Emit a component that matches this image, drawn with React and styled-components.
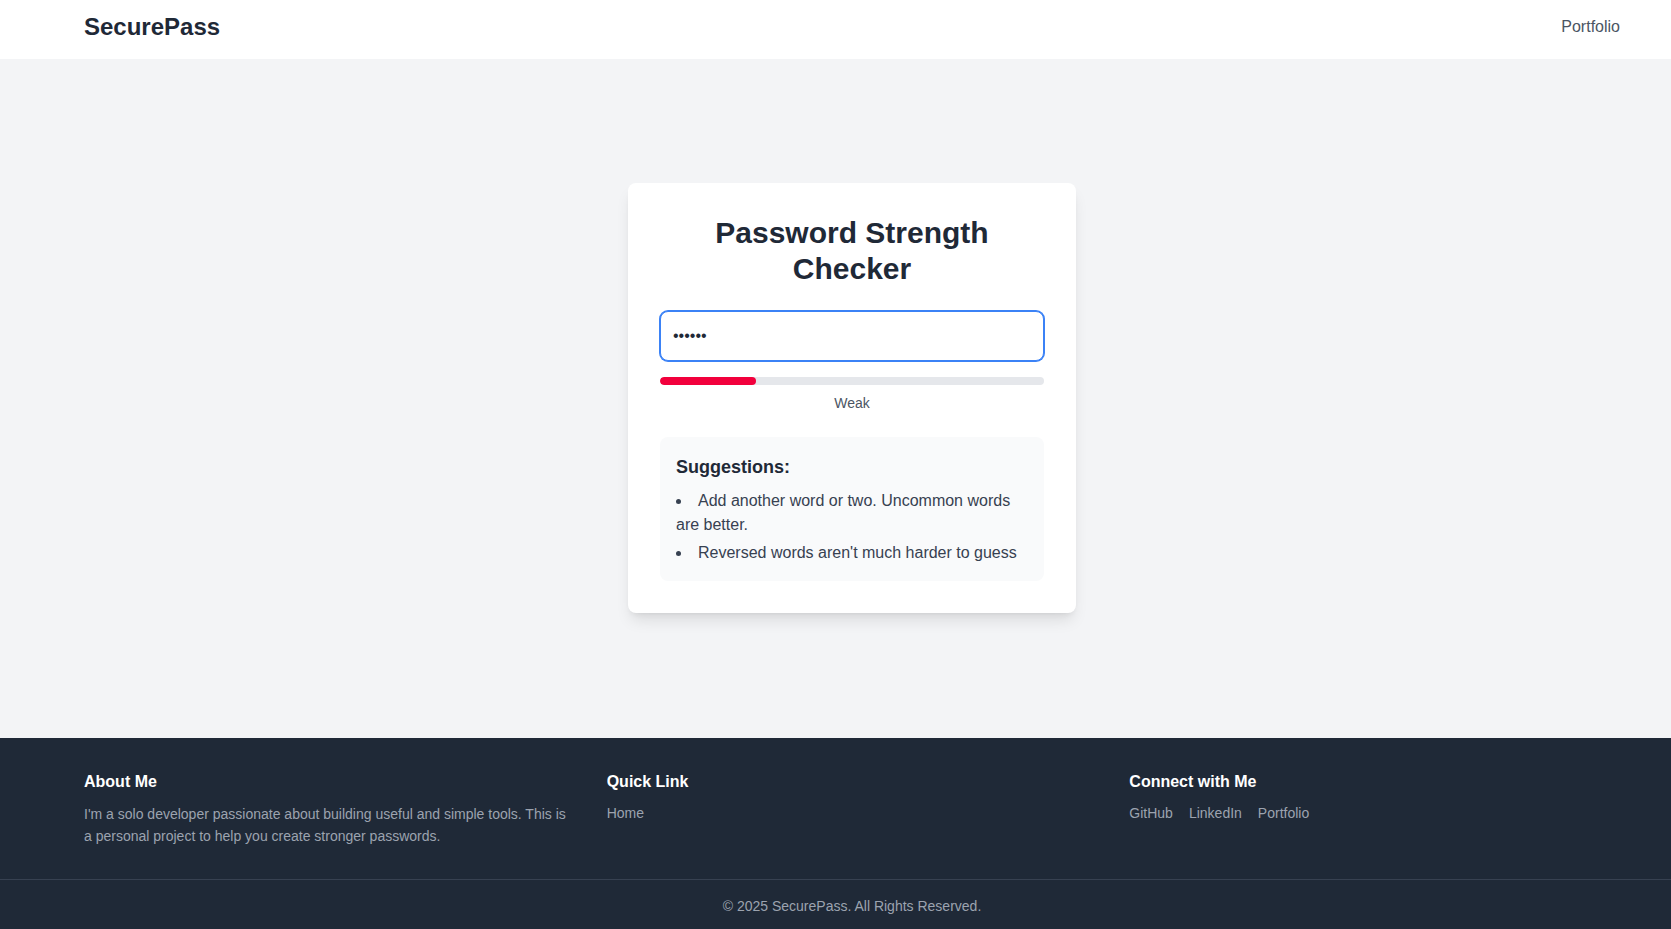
import React, { useState } from "react";
import styled, { createGlobalStyle } from "styled-components";

const GlobalStyle = createGlobalStyle`
  * { box-sizing: border-box; }
  html, body { margin: 0; padding: 0; }
  body {
    font-family: "Liberation Sans", Arial, sans-serif;
    background: #f3f4f6;
    color: #1f2937;
  }
`;

const Page = styled.div`
  display: flex;
  flex-direction: column;
  min-height: 100vh;
`;

const Container = styled.div`
  width: 100%;
  padding: 0 51px 0 84px;
`;

const Header = styled.header`
  background: #ffffff;
  height: 59px;
`;

const HeaderRow = styled(Container)`
  height: 53px;
  display: flex;
  align-items: center;
  justify-content: space-between;
`;

const Logo = styled.a`
  font-size: 24px;
  line-height: 32px;
  font-weight: 700;
  color: #1f2937;
  text-decoration: none;
`;

const NavLink = styled.a`
  font-size: 16px;
  line-height: 24px;
  color: #4b5563;
  text-decoration: none;
`;

const Main = styled.main`
  min-height: 679px;
  padding-bottom: 1px;
  display: flex;
  align-items: center;
`;

const MainInner = styled(Container)`
  display: flex;
  justify-content: center;
`;

const Card = styled.div`
  width: 448px;
  background: #ffffff;
  border-radius: 8px;
  padding: 32px;
  box-shadow: 0 10px 15px -3px rgba(0, 0, 0, 0.1), 0 4px 6px -4px rgba(0, 0, 0, 0.1);
`;

const Title = styled.h1`
  margin: 0 0 24px;
  text-align: center;
  font-size: 30px;
  line-height: 36px;
  font-weight: 700;
  color: #1f2937;
`;

const PasswordInput = styled.input`
  display: block;
  width: 100%;
  height: 50px;
  padding: 12px;
  font-family: "Liberation Sans", Arial, sans-serif;
  font-size: 16px;
  line-height: 24px;
  color: #1f2937;
  caret-color: #111827;
  background: #ffffff;
  border: 1px solid #3b82f6;
  border-radius: 8px;
  outline: none;
  box-shadow: 0 0 0 1px #3b82f6;
  margin-bottom: 16px;
`;

const Track = styled.div`
  height: 8px;
  width: 100%;
  background: #e5e7eb;
  border-radius: 9999px;
  overflow: hidden;
`;

const Fill = styled.div`
  height: 100%;
  background: ${(p) => p.$color};
  border-radius: 9999px;
`;

const StrengthLabel = styled.p`
  margin: 8px 0 0;
  text-align: center;
  font-size: 14px;
  line-height: 20px;
  color: #4b5563;
`;

const SuggestBox = styled.div`
  margin-top: 24px;
  background: #f9fafb;
  border-radius: 8px;
  padding: 16px;
`;

const SuggestTitle = styled.h3`
  margin: 0 0 8px;
  font-size: 18px;
  line-height: 28px;
  font-weight: 700;
  color: #1f2937;
`;

const SuggestList = styled.ul`
  margin: 0;
  padding: 0;
  list-style: disc inside;
  display: flex;
  flex-direction: column;
  gap: 4px;
`;

const SuggestItem = styled.li`
  font-size: 16px;
  line-height: 24px;
  color: #374151;
`;

const Footer = styled.footer`
  background: #1f2937;
  color: #ffffff;
  padding-top: 32px;
`;

const FooterGrid = styled(Container)`
  display: grid;
  grid-template-columns: repeat(3, 1fr);
  gap: 32px;
`;

const FooterHeading = styled.h4`
  margin: 0 0 9px;
  font-size: 16px;
  line-height: 24px;
  font-weight: 700;
  color: #ffffff;
`;

const FooterText = styled.p`
  margin: 0;
  font-size: 14px;
  line-height: 22px;
  color: #9ca3af;
`;

const FooterLinks = styled.div`
  display: flex;
  gap: 16px;
`;

const FooterLink = styled.a`
  font-size: 14px;
  line-height: 20px;
  color: #9ca3af;
  text-decoration: none;
`;

const Bottom = styled.div`
  margin-top: 32px;
  border-top: 1px solid #374151;
  padding: 16px 0;
`;

const Copyright = styled(Container)`
  text-align: center;
  font-size: 14px;
  line-height: 20px;
  color: #9ca3af;
`;

export default function App() {
  const [pw, setPw] = useState("abcdef");
  const strength = 25;
  return (
    <>
      <GlobalStyle />
      <Page>
        <Header>
          <HeaderRow>
            <Logo href="#">SecurePass</Logo>
            <NavLink href="#">Portfolio</NavLink>
          </HeaderRow>
        </Header>
        <Main>
          <MainInner>
            <Card>
              <Title>Password Strength Checker</Title>
              <PasswordInput
                type="password"
                value={pw}
                onChange={(e) => setPw(e.target.value)}
                autoFocus
              />
              <Track>
                <Fill $color="#f2003c" style={{ width: `${strength}%` }} />
              </Track>
              <StrengthLabel>Weak</StrengthLabel>
              <SuggestBox>
                <SuggestTitle>Suggestions:</SuggestTitle>
                <SuggestList>
                  <SuggestItem>Add another word or two. Uncommon words are better.</SuggestItem>
                  <SuggestItem>Reversed words aren't much harder to guess</SuggestItem>
                </SuggestList>
              </SuggestBox>
            </Card>
          </MainInner>
        </Main>
        <Footer>
          <FooterGrid>
            <div>
              <FooterHeading>About Me</FooterHeading>
              <FooterText>
                I'm a solo developer passionate about building useful and simple tools. This is a
                personal project to help you create stronger passwords.
              </FooterText>
            </div>
            <div>
              <FooterHeading>Quick Link</FooterHeading>
              <FooterLinks>
                <FooterLink href="#">Home</FooterLink>
              </FooterLinks>
            </div>
            <div>
              <FooterHeading>Connect with Me</FooterHeading>
              <FooterLinks>
                <FooterLink href="#">GitHub</FooterLink>
                <FooterLink href="#">LinkedIn</FooterLink>
                <FooterLink href="#">Portfolio</FooterLink>
              </FooterLinks>
            </div>
          </FooterGrid>
          <Bottom>
            <Copyright>© 2025 SecurePass. All Rights Reserved.</Copyright>
          </Bottom>
        </Footer>
      </Page>
    </>
  );
}
